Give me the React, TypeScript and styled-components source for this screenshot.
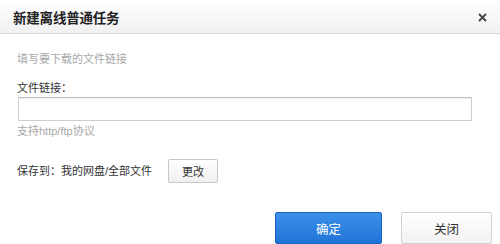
import React from 'react';
import styled, { createGlobalStyle } from 'styled-components';

const GlobalStyle = createGlobalStyle`
  html, body {
    margin: 0;
    padding: 0;
    background: #fff;
  }
  body {
    font-family: "Liberation Sans", "Noto Sans CJK SC", sans-serif;
  }
`;

// 对话框外框
const Dialog = styled.div`
  width: 500px;
  height: 244px;
  background: #fff;
  display: flex;
  flex-direction: column;
  overflow: hidden;
`;

const Header = styled.div`
  height: 33px;
  display: flex;
  align-items: center;
  justify-content: space-between;
  padding: 0 12px 0 13px;
  background: linear-gradient(to bottom, #ffffff 0%, #f1f1f1 100%);
  border-bottom: 1px solid #d6d6d6;
`;

const Title = styled.h3`
  margin: 0;
  font-size: 13.5px;
  font-weight: bold;
  color: #222;
  letter-spacing: -0.2px;
`;

const CloseButton = styled.button`
  width: 12px;
  height: 12px;
  padding: 0;
  border: none;
  background: transparent;
  display: flex;
  align-items: center;
  justify-content: center;
  cursor: pointer;
  margin-top: 2px;
`;

const Body = styled.div`
  flex: 1;
  display: flex;
  flex-direction: column;
  padding: 17px 28px 0 17px;
`;

const Text = styled.div<{ $muted?: boolean; $gap?: number }>`
  font-size: 11px;
  line-height: 16px;
  color: ${p => (p.$muted ? '#a8a8a8' : '#333')};
  margin-top: ${p => p.$gap ?? 0}px;
`;

const LinkInput = styled.input`
  height: 24px;
  box-sizing: border-box;
  width: calc(100% - 1px);
  margin: 1px 0 0 1px;
  border: 1px solid #cfcfcf;
  border-top-color: #bdbdbd;
  box-shadow: inset 0 1px 1px rgba(0, 0, 0, 0.06);
  outline: none;
  padding: 0 6px;
  font-size: 12px;
`;

const SaveRow = styled.div`
  display: flex;
  align-items: center;
  margin-top: 20px;
  height: 24px;
`;

const SmallButton = styled.button`
  margin-left: 16px;
  width: 50px;
  height: 24px;
  border: 1px solid #c8c8c8;
  border-radius: 2px;
  background: linear-gradient(to bottom, #ffffff 0%, #f0f0f0 100%);
  color: #333;
  font-size: 11px;
  font-family: inherit;
  padding: 0;
  cursor: pointer;
`;

const Footer = styled.div`
  display: flex;
  justify-content: flex-end;
  gap: 19px;
  padding: 15px 8px 0 0;
`;

const FooterButton = styled.button<{ $primary?: boolean; $width: number }>`
  width: ${p => p.$width}px;
  height: 32px;
  border-radius: 2px;
  font-size: 12.5px;
  font-family: inherit;
  cursor: pointer;
  padding: 0;
  border: 1px solid ${p => (p.$primary ? '#1c62be' : '#d0d0d0')};
  color: ${p => (p.$primary ? '#fff' : '#333')};
  background: ${p =>
    p.$primary
      ? 'linear-gradient(to bottom, #3b90e8 0%, #1f74d8 100%)'
      : 'linear-gradient(to bottom, #ffffff 0%, #f2f2f2 100%)'};
`;

const App: React.FC = () => {
  return (
    <>
      <GlobalStyle />
      <Dialog>
        <Header>
          <Title>新建离线普通任务</Title>
          <CloseButton aria-label="关闭">
            <svg width="9" height="9" viewBox="0 0 9 9">
              <path d="M1 1 L8 8 M8 1 L1 8" stroke="#444" strokeWidth="1.8" />
            </svg>
          </CloseButton>
        </Header>
        <Body>
          <Text $muted>填写要下载的文件链接</Text>
          <Text $gap={13}>文件链接：</Text>
          <LinkInput type="text" />
          <Text $muted $gap={2}>支持http/ftp协议</Text>
          <SaveRow>
            <Text>保存到：我的网盘/全部文件</Text>
            <SmallButton>更改</SmallButton>
          </SaveRow>
        </Body>
        <Footer>
          <FooterButton $primary $width={107}>确定</FooterButton>
          <FooterButton $width={91}>关闭</FooterButton>
        </Footer>
      </Dialog>
    </>
  );
};

export default App;
